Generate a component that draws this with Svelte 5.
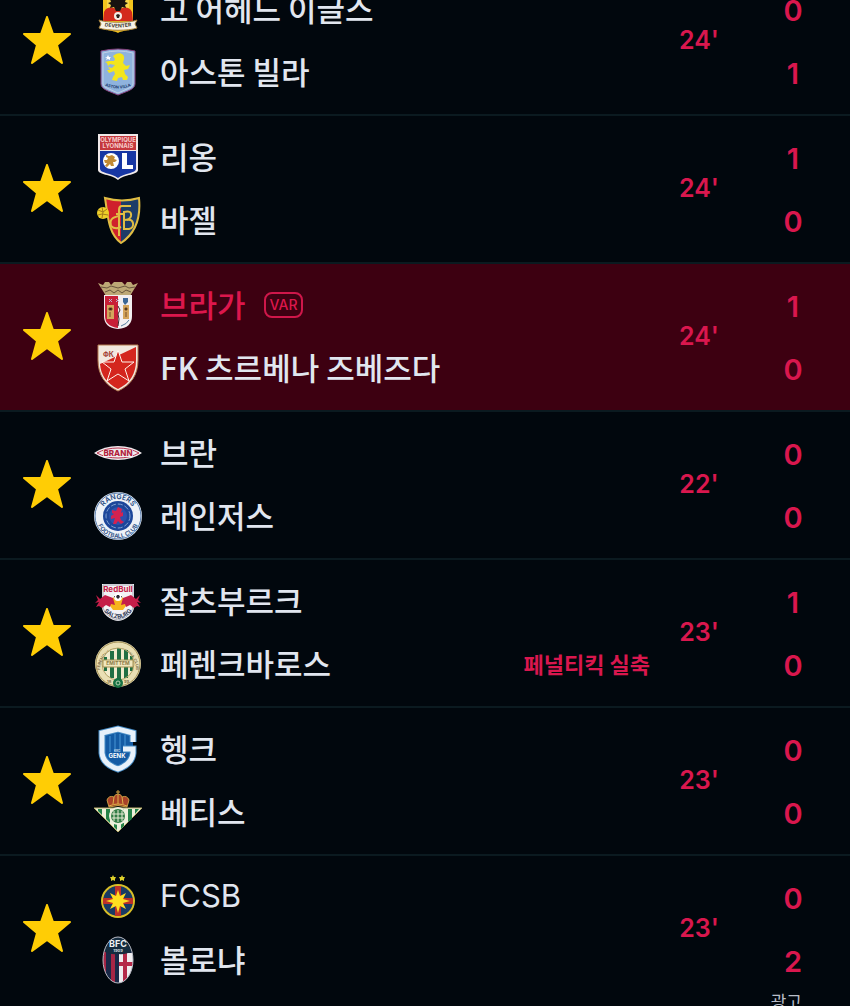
<script>
    let matches = $state([
        {
            minute: 24,
            starred: true,
            teams: [
                { name: "고 어헤드 이글스", crest: "eagles", score: 0 },
                { name: "아스톤 빌라", crest: "villa", score: 1 },
            ],
        },
        {
            minute: 24,
            starred: true,
            teams: [
                { name: "리옹", crest: "lyon", score: 1 },
                { name: "바젤", crest: "basel", score: 0 },
            ],
        },
        {
            minute: 24,
            starred: true,
            alert: true,
            teams: [
                { name: "브라가", crest: "braga", score: 1, tag: "VAR" },
                { name: "FK 츠르베나 즈베즈다", crest: "zvezda", score: 0 },
            ],
        },
        {
            minute: 22,
            starred: true,
            teams: [
                { name: "브란", crest: "brann", score: 0 },
                { name: "레인저스", crest: "rangers", score: 0 },
            ],
        },
        {
            minute: 23,
            starred: true,
            teams: [
                { name: "잘츠부르크", crest: "salzburg", score: 1 },
                {
                    name: "페렌크바로스",
                    crest: "ferencvaros",
                    score: 0,
                    event: "페널티킥 실축",
                },
            ],
        },
        {
            minute: 23,
            starred: true,
            teams: [
                { name: "헹크", crest: "genk", score: 0 },
                { name: "베티스", crest: "betis", score: 0 },
            ],
        },
        {
            minute: 23,
            starred: true,
            teams: [
                { name: "FCSB", crest: "fcsb", score: 0 },
                { name: "볼로냐", crest: "bologna", score: 2 },
            ],
        },
    ]);

    const isLatin = (name) => /^[A-Za-z ]+$/.test(name);
</script>

{#snippet crest(id)}
    <svg class="crest" viewBox="0 0 48 48" aria-hidden="true">
        {#if id === "eagles"}
            <path d="M9 2h30v34c0 6-8 7-15 11C17 43 9 42 9 36z" fill="#f3c51d" />
            <path d="M13 5h22v18H13z" fill="#f7d64a" />
            <path d="M10 27c3-6 9-5 14-2 5-3 11-4 14 2l1 9H9z" fill="#d32a1c" />
            <path
                d="M24 11l2 4 6-1-1 3 3 1-3 2 1 3-4-1-2 4h-4l-2-4-4 1 1-3-3-2 3-1-1-3 6 1z"
                fill="#17120f"
            />
            <circle cx="24" cy="31" r="4" fill="#f4eee6" />
            <path d="M24 29l2 1-1 3h-2l-1-3z" fill="#29211d" />
            <path d="M8 40c-1 7 9 4 16 8 7-4 17-1 16-8z" fill="#f0c01c" />
            <path
                d="M5 35c7 3 31 3 38 0l-2 4 2 4c-8 3-30 3-38 0l2-4z"
                fill="#f7f3e8"
                stroke="#a8813a"
            />
            <path id="eaglesBand" d="M10 41q14 3 28 0" fill="none" />
            <text font-size="5" font-weight="700" fill="#40382e" text-anchor="middle">
                <textPath href="#eaglesBand" startOffset="50%">DEVENTER</textPath>
            </text>
        {:else if id === "villa"}
            <path
                d="M7 3q17-4 34 0v33q0 4-7 7l-10 4-10-4q-7-3-7-7z"
                fill="#8fb3dd"
                stroke="#85407c"
            />
            <path
                d="M9 5q15-4 30 0v31q0 3-6 5l-9 4-9-4q-6-2-6-5z"
                fill="none"
                stroke="#c0cfe6"
                stroke-width="1"
            />
            <path
                d="M22 6c5-2 9 1 8 5l-1 4 3 3 4-1-2 4-4 1 1 4 3 3-1 3h-4l-1-3-4 1-1 3-5-1 1-3 2-3-1-3-5 2-2-3 3 0-2-3 4 1 3-3-5-1-2 2-1-3-2-1 4-1 5 0 1-2-2-3z"
                fill="#f3e51c"
            />
            <path d="M14 7l1 2 2 0-1 1 0 2-2-1-2 1 1-2-2-1h2z" fill="#fff" />
            <path id="villaBand" d="M9 37q15 7 30 0" fill="none" />
            <text font-size="4" font-weight="700" fill="#203c6f" text-anchor="middle">
                <textPath href="#villaBand" startOffset="50%">ASTON VILLA</textPath>
            </text>
        {:else if id === "lyon"}
            <path d="M4 1h40v36c0 5-13 4-20 10C17 41 4 42 4 37z" fill="#f0e9e9" />
            <path d="M6 3h36v14H6z" fill="#c5383d" />
            <path d="M6 18h36v18c0 4-11 4-18 9-7-5-18-5-18-9z" fill="#1736a3" />
            <g font-weight="700" text-anchor="middle" fill="#f6cdcb">
                <text x="24" y="9" font-size="6">OLYMPIQUE</text>
                <text x="24" y="15" font-size="6">LYONNAIS</text>
            </g>
            <circle cx="17" cy="28" r="8" fill="#fff" />
            <path
                d="M18 22l3 2-1 2 3 1-2 2-2 0 1 4-3 0-1-2-3 3-2-1 2-3-2 0-1-3 3 0 1-2-2-1 0-2 3 1z"
                fill="#c28a34"
            />
            <path d="M28 20h5v12h6v4H28z" fill="#fff" />
        {:else if id === "basel"}
            <path d="M11 2q17 5 34 0c2 20-3 35-18 45C14 37 14 20 11 2z" fill="#1d3c68" />
            <path d="M11 2q8 2 16 3v42C14 37 14 20 11 2z" fill="#cf202c" />
            <path
                d="M11 2q17 5 34 0c2 20-3 35-18 45C14 37 14 20 11 2z"
                fill="none"
                stroke="#e0bd43"
                stroke-width="2"
            />
            <path
                d="M37 10H28q-3 0-3 4v26M22 18h9M25 20q-11 2-8 10 4 4 10 1M30 15v18h5q5-1 4-6-1-4-6-3M30 16q8-2 7 4-1 4-7 4"
                fill="none"
                stroke="#e0bd43"
                stroke-width="2"
            />
            <circle cx="9" cy="17" r="6" fill="#edcf28" />
            <path
                d="M4 14l5 2 4-3M9 16l-1 6M4 19l4-1 6 1M8 11l1 5"
                fill="none"
                stroke="#a47d1a"
            />
        {:else if id === "braga"}
            <path
                d="M4 2l5 2 2-3h4l2 3 3-3h8l3 3 2-3h4l2 3 5-2-5 8-3 5H12L9 10z"
                fill="#bda876"
            />
            <path
                d="M7 6l6 1 4-2 7 2 7-2 4 2 6-1M11 11l5-2 4 3 4-3 4 3 4-3 5 2"
                fill="none"
                stroke="#67533c"
                stroke-width="1"
            />
            <path d="M10 14h28v21q0 12-14 13Q10 47 10 35z" fill="#f2eef0" />
            <path d="M11 15h13v32Q11 45 11 35z" fill="#c81f37" />
            <path
                d="M15 18l3 3m0-3l-3 3M22 18l3 3m0-3l-3 3"
                stroke="#b9b4d3"
                stroke-width="1"
            />
            <path d="M29 17h5v4l-3 3-2-3z" fill="#3c6797" />
            <path d="M13 24h7v14h-7zM29 24h6v14h-6z" fill="#d4a45c" />
            <path d="M15 27h3v2h-3zM16 31v5M31 27h2v2h-2zM32 31v5" stroke="#754c29" />
            <path d="M24 25l2 4-2 4 1 5-1 7" fill="none" stroke="#42272d" stroke-width="1" />
            <path d="M27 45q6-2 8-6" fill="none" stroke="#557d9d" stroke-width="1" />
        {:else if id === "zvezda"}
            <path
                d="M4 1h40v15c0 15-7 25-20 31C11 41 4 31 4 16z"
                fill="#f2e8df"
                stroke="#b77d52"
            />
            <path d="M42 3v13c0 14-6 23-18 29C12 39 7 31 6 20z" fill="#d4261e" />
            <text x="9" y="13" font-size="7" font-weight="700" fill="#a03c31">ФК</text>
            <path
                d="M24 6l4 12h12l-9 7 4 12-11-7-11 7 4-12-9-7h12z"
                fill="#d4261e"
                stroke="#fff4ec"
            />
        {:else if id === "brann"}
            <path d="M0 24q10-7 24-7t24 7q-10 7-24 7T0 24z" fill="#f1ecef" />
            <path
                d="M3 24q9-5 21-5t21 5q-9 5-21 5T3 24z"
                fill="none"
                stroke="#b93650"
            />
            <path d="M9 21h30v7H9z" fill="#f1ecef" />
            <text
                x="24"
                y="27"
                font-size="8"
                font-weight="800"
                text-anchor="middle"
                fill="#b31f3d">BRANN</text
            >
        {:else if id === "rangers"}
            <circle cx="24" cy="24" r="24" fill="#eef2f8" />
            <circle cx="24" cy="24" r="23" fill="none" stroke="#5279ac" />
            <path id="rangersTop" d="M7 24a17 17 0 0 1 34 0" fill="none" />
            <path id="rangersBottom" d="M2 24a22 22 0 0 0 44 0" fill="none" />
            <g font-size="7" font-weight="600" fill="#264b82" text-anchor="middle">
                <text><textPath href="#rangersTop" startOffset="50%">RANGERS</textPath></text>
                <text font-size="6">
                    <textPath href="#rangersBottom" startOffset="50%">FOOTBALL CLUB</textPath>
                </text>
            </g>
            <circle cx="24" cy="24" r="15" fill="#1c469a" />
            <circle
                cx="24"
                cy="24"
                r="12"
                fill="none"
                stroke="#81a1d3"
                stroke-dasharray="5 2"
            />
            <circle cx="24" cy="24" r="9" fill="#2c51ad" />
            <path
                d="M24 15l4 2-1 4 2-1 0 4-3 1 1 3 3 2-3 2-3-3-2 3-3 0 1-3 1-3-4 1 0-3 3-2-2-1 0-3 4 1z"
                fill="#d32250"
            />
        {:else if id === "salzburg"}
            <path d="M8 7h32v23c0 7-8 13-16 14C16 43 8 37 8 30z" fill="#f3f2f6" />
            <path d="M9 8h30v21c0 7-8 13-15 14-7-1-15-7-15-14z" fill="none" stroke="#a7abb6" />
            <path d="M14 26q10-14 20 0l-5 7H19z" fill="#f6b51d" />
            <path
                d="M2 18l4 4 5-4 8 3 2 7-4-1-1 3-4-2-4 3-3-2-3 1 3-5-4 1 3-3zM46 18l-4 4-5-4-8 3-2 7 4-1 1 3 4-2 4 3 3-2 3 1-3-5 4 1-3-3z"
                fill="#c51e49"
            />
            <text
                x="24"
                y="15"
                font-size="8"
                font-weight="700"
                text-anchor="middle"
                fill="#c51e49">RedBull</text
            >
            <circle cx="24" cy="20" r="4" fill="#fff" />
            <path d="M23 18h2l1 2-2 2-2-2zM20 19h1v2M27 19h1v2" fill="#282832" />
            <path id="salzburgBand" d="M9 33q15 17 30 0" fill="none" />
            <text font-size="6" font-weight="700" fill="#303b58" text-anchor="middle">
                <textPath href="#salzburgBand" startOffset="50%">SALZBURG</textPath>
            </text>
        {:else if id === "ferencvaros"}
            <circle cx="24" cy="24" r="23" fill="#eadfb4" />
            <circle cx="24" cy="24" r="22" fill="none" stroke="#a59256" />
            <path id="ftcTop" d="M6 29a18 18 0 1 1 36 0" fill="none" />
            <text font-size="4" font-weight="600" fill="#716442" text-anchor="middle">
                <textPath href="#ftcTop" startOffset="50%">FERENCVÁROSI TORNA CLUB</textPath>
            </text>
            <circle cx="24" cy="24" r="16" fill="#f2ebce" />
            <path
                d="M10 17h3v14h-3zM16 11h4v27h-4zM23 8h4v32h-4zM30 10h4v28h-4zM36 16h3v15h-3z"
                fill="#216f43"
            />
            <circle cx="24" cy="24" r="16" fill="none" stroke="#b3a365" />
            <path d="M9 20h30v7H9z" fill="#f0e7be" stroke="#a69357" />
            <text
                x="24"
                y="25"
                font-size="5"
                font-weight="700"
                text-anchor="middle"
                fill="#8d7a46">EMITTEM</text
            >
            <text x="13" y="43" font-size="4" font-weight="700" fill="#7b6b41">18</text>
            <text x="30" y="43" font-size="4" font-weight="700" fill="#7b6b41">99</text>
            <circle cx="24" cy="43" r="5" fill="#167143" />
            <circle cx="24" cy="43" r="2" fill="none" stroke="#b6d3b2" />
        {:else if id === "genk"}
            <path d="M8 8l16-5 15 5v20q-2 11-15 16Q9 39 8 28z" fill="#145ba4" />
            <path d="M16 11v16M21 9v18M26 9v18M31 10v12" stroke="#2e79bd" stroke-width="2" />
            <path
                d="M39 17V8L24 4 8 8v20q1 11 16 16 14-5 15-16v-4H29"
                fill="none"
                stroke="#458bc5"
                stroke-width="7"
            />
            <path
                d="M39 17V8L24 4 8 8v20q1 11 16 16 14-5 15-16v-4H29"
                fill="none"
                stroke="#e8f1fa"
                stroke-width="5"
            />
            <text x="23" y="27" font-size="3" text-anchor="middle" fill="#fff">KRC</text>
            <text
                x="23"
                y="33"
                font-size="6"
                font-weight="700"
                text-anchor="middle"
                fill="#fff">GENK</text
            >
        {:else if id === "betis"}
            <path d="M0 20h48L24 44z" fill="#edf0dc" stroke="#b9ae6a" />
            <path
                d="M4 21h4v6l-4-4zM12 21h4v14l-4-4zM20 21h3v21l-3-3zM27 21h3v17l-3 3zM34 21h4v10l-4 3zM41 21h4l-4 5z"
                fill="#258348"
            />
            <circle cx="24" cy="28" r="9" fill="#edf0dc" />
            <circle cx="24" cy="28" r="7" fill="#327d46" />
            <path
                d="M20 23v10M24 22v12M28 23v10M18 26h12M18 30h12"
                stroke="#e8ecd5"
                stroke-width="1"
            />
            <path
                d="M15 19l-2-7q2-5 7-3 1-3 4-3t4 3q5-2 7 3l-2 7q-9-3-18 0z"
                fill="#a94228"
                stroke="#c89c42"
            />
            <path d="M24 2v5M22 4h4" stroke="#cf9f42" stroke-width="1" />
            <path
                d="M15 18q9-4 18 0M24 7v9M20 9l-1 7M28 9l1 7"
                fill="none"
                stroke="#dfb14b"
                stroke-width="1"
            />
        {:else if id === "fcsb"}
            <path
                d="M19 2l1 2h2l-1 2v2l-2-1-2 1V6l-1-2h2zM28 2l1 2h2l-1 2v2l-2-1-2 1V6l-1-2h2z"
                fill="#ddd02b"
            />
            <circle cx="24" cy="28" r="17" fill="#d9bf27" />
            <circle cx="24" cy="28" r="15" fill="#193a63" />
            <path d="M21 13h6v12h12v6H27v12h-6V31H9v-6h12z" fill="#bd3028" />
            <path
                d="M24 17l2 6 6-3-3 6 7 2-7 2 3 6-6-3-2 7-2-7-6 3 3-6-7-2 7-2-3-6 6 3z"
                fill="#ffdf20"
            />
        {:else if id === "bologna"}
            <clipPath id="bolognaOval"><ellipse cx="24" cy="24" rx="15" ry="23" /></clipPath>
            <g clip-path="url(#bolognaOval)">
                <path d="M8 0h32v48H8z" fill="#1a2847" />
                <path d="M8 14h4v34H8zM17 16h4v32h-4z" fill="#a62645" />
                <path d="M25 17h15v31H25z" fill="#efedf0" />
                <path d="M29 17h4v31h-4zM25 26h15v4H25z" fill="#b42949" />
                <path d="M8 0h32v14q-7 5-16 4-9 1-16-4z" fill="#152c3f" />
            </g>
            <text
                x="24"
                y="11"
                font-size="9"
                font-weight="700"
                text-anchor="middle"
                fill="#eef2f4">BFC</text
            >
            <text
                x="24"
                y="16"
                font-size="4"
                font-weight="700"
                text-anchor="middle"
                fill="#dbe1e4">1909</text
            >
            <ellipse cx="24" cy="24" rx="15" ry="23" fill="none" stroke="#b9bbc4" />
        {/if}
    </svg>
{/snippet}

<main>
    <ul class="matches">
        {#each matches as match}
            <li class="match" class:alert={match.alert}>
                <button
                    class="star"
                    aria-label="즐겨찾기"
                    aria-pressed={match.starred}
                    onclick={() => (match.starred = !match.starred)}
                >
                    <svg viewBox="0 0 48 48" class:off={!match.starred}>
                        <path d="M24 1l6 17h17L34 29l5 18-15-11L9 47l5-18L1 18h17z" />
                    </svg>
                </button>
                <div class="teams">
                    {#each match.teams as team}
                        <div class="team">
                            {@render crest(team.crest)}
                            <span
                                class="name"
                                class:latin={isLatin(team.name)}
                                class:flagged={team.tag}>{team.name}</span
                            >
                            {#if team.tag}
                                <span class="tag">{team.tag}</span>
                            {/if}
                            {#if team.event}
                                <strong class="event">{team.event}</strong>
                            {/if}
                        </div>
                    {/each}
                </div>
                <span class="minute">{match.minute}'</span>
                <div class="scores">
                    {#each match.teams as team}
                        <span class="score">{team.score}</span>
                    {/each}
                </div>
            </li>
        {/each}
    </ul>
    <footer>광고</footer>
</main>

<style>
    :global(body) {
        background: #01070d;
    }

    main {
        height: 100vh;
        overflow: hidden;
        color: #e1e6ef;
        font-family: Inter, "Noto Sans CJK KR", sans-serif;
    }

    /* the list is scrolled part of the way into its first match */
    .matches {
        list-style: none;
        margin: -32px 0 0;
        padding: 0;
    }

    .match {
        display: flex;
        align-items: center;
        padding: 9px 0 11px;
        border-bottom: 2px solid #0b1a20;
    }

    .match:last-child {
        border-bottom-color: transparent;
    }

    .match.alert {
        background: #3d0011;
    }

    .star {
        flex: none;
        width: 94px;
        padding: 0;
        border: 0;
        background: none;
        cursor: pointer;
    }

    .star svg {
        display: block;
        width: 48px;
        height: 48px;
        margin: 0 auto;
        fill: #ffcd05;
        stroke: #ffcd05;
        stroke-width: 2;
        stroke-linejoin: round;
    }

    .star svg.off {
        fill: none;
    }

    .teams {
        flex: 1;
        min-width: 0;
    }

    .team {
        display: flex;
        align-items: center;
        height: 63px;
    }

    .crest {
        flex: none;
        width: 48px;
        height: 48px;
        margin-right: 18px;
    }

    .name,
    .event {
        padding-bottom: 2px;
        font-family: "Noto Sans CJK KR", sans-serif;
        white-space: nowrap;
    }

    .name {
        font-size: 31px;
        font-weight: 500;
        line-height: 40px;
    }

    .latin {
        font-family: Inter, sans-serif;
        font-weight: 400;
    }

    .flagged {
        color: #dc174c;
    }

    .tag {
        margin-left: 18px;
        padding: 0 4px;
        border: 2px solid #cf174a;
        border-radius: 8px;
        color: #dc174c;
        font-size: 14px;
        font-weight: 500;
        line-height: 22px;
    }

    .event {
        margin-left: auto;
        padding-right: 12px;
        color: #d9174e;
        font-size: 22px;
        font-weight: 700;
    }

    .minute {
        flex: none;
        width: 74px;
        color: #d9174e;
        font-size: 25px;
        font-weight: 600;
        text-align: center;
    }

    .scores {
        flex: none;
        width: 114px;
        padding-top: 2px;
        margin-bottom: -2px;
    }

    .score {
        display: block;
        color: #d9174e;
        font-size: 29px;
        font-weight: 600;
        line-height: 63px;
        text-align: center;
    }

    footer {
        margin-top: -14px;
        padding-right: 48px;
        color: #b9bec8;
        font-size: 17px;
        line-height: 24px;
        text-align: right;
    }
</style>
